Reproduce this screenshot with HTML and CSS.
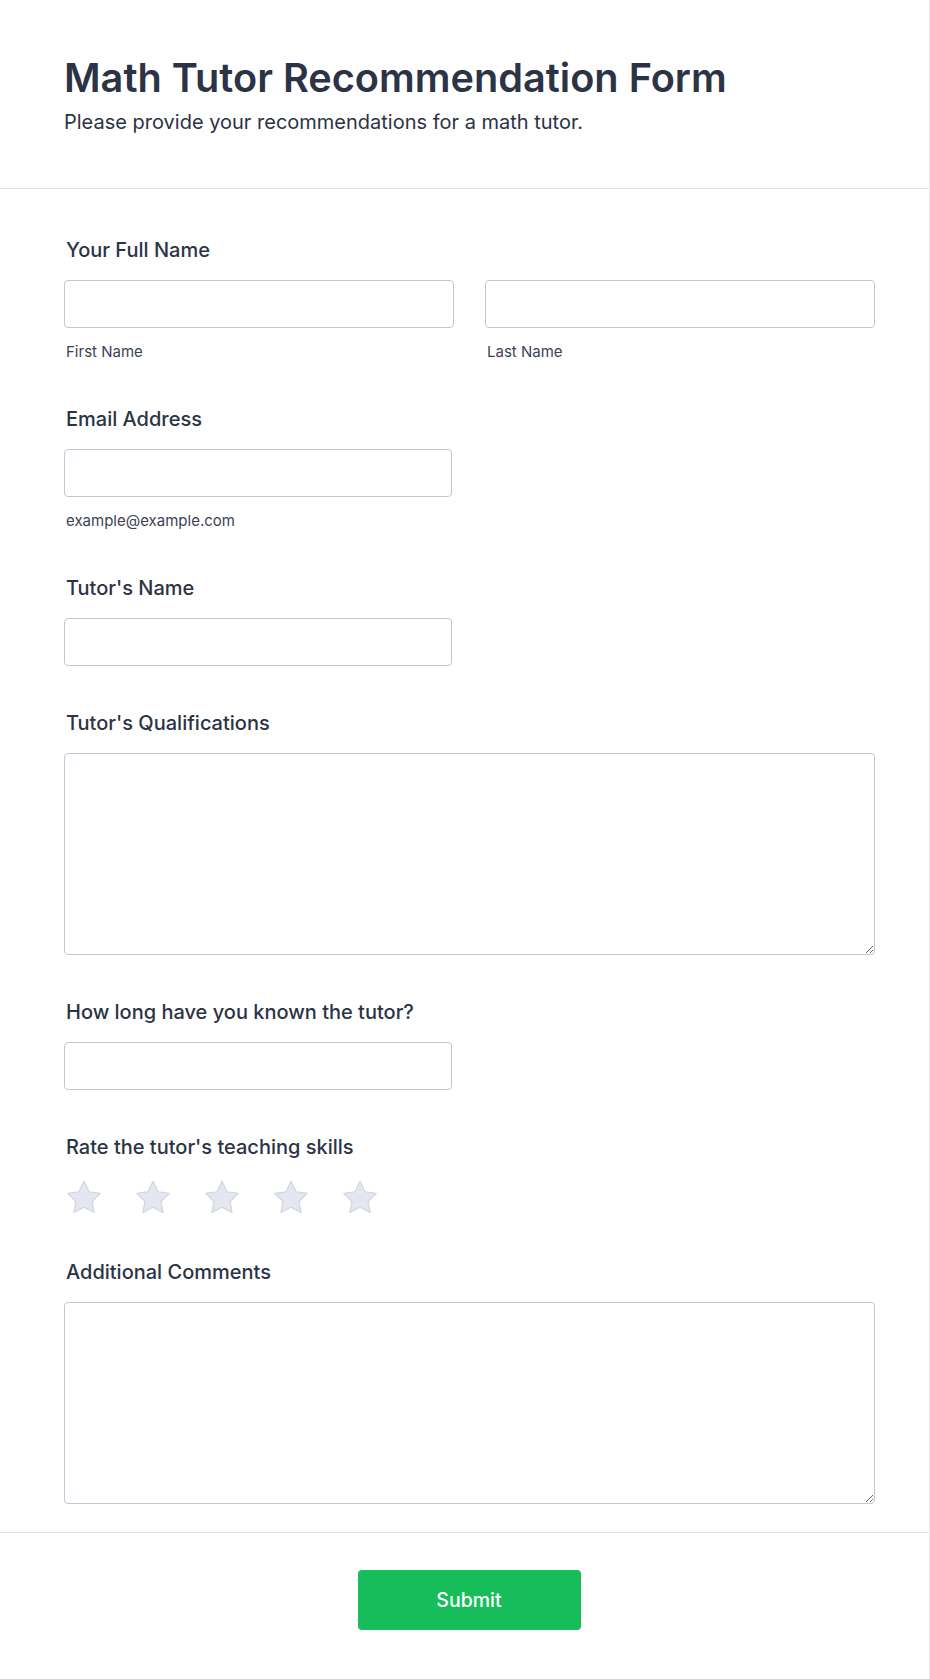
FILE: index.html
```html
<!DOCTYPE html>
<html lang="en">
<head>
<meta charset="utf-8">
<title>Math Tutor Recommendation Form</title>
<link rel="stylesheet" href="styles.css">
</head>
<body>
<div class="page">
  <header class="form-header">
    <h1 class="title">Math Tutor Recommendation Form</h1>
    <p class="subtitle">Please provide your recommendations for a math tutor.</p>
  </header>

  <main class="form-body">
    <div class="field">
      <label class="label">Your Full Name</label>
      <div class="name-row">
        <div class="sub-field">
          <input class="input" type="text">
          <span class="sublabel">First Name</span>
        </div>
        <div class="sub-field">
          <input class="input" type="text">
          <span class="sublabel">Last Name</span>
        </div>
      </div>
    </div>

    <div class="field">
      <label class="label">Email Address</label>
      <input class="input input-short" type="email">
      <span class="sublabel">example@example.com</span>
    </div>

    <div class="field">
      <label class="label">Tutor's Name</label>
      <input class="input input-short" type="text">
    </div>

    <div class="field">
      <label class="label">Tutor's Qualifications</label>
      <textarea class="textarea"></textarea>
    </div>

    <div class="field">
      <label class="label">How long have you known the tutor?</label>
      <input class="input input-short" type="text">
    </div>

    <div class="field">
      <label class="label label-rating">Rate the tutor's teaching skills</label>
      <div class="stars">
        <svg class="star" viewBox="0 0 40 38" aria-hidden="true"><path d="M20 2.5 L25.3 13.4 L37.2 15.1 L28.6 23.5 L30.6 35.4 L20 29.8 L9.4 35.4 L11.4 23.5 L2.8 15.1 L14.7 13.4 Z"/></svg>
        <svg class="star" viewBox="0 0 40 38" aria-hidden="true"><path d="M20 2.5 L25.3 13.4 L37.2 15.1 L28.6 23.5 L30.6 35.4 L20 29.8 L9.4 35.4 L11.4 23.5 L2.8 15.1 L14.7 13.4 Z"/></svg>
        <svg class="star" viewBox="0 0 40 38" aria-hidden="true"><path d="M20 2.5 L25.3 13.4 L37.2 15.1 L28.6 23.5 L30.6 35.4 L20 29.8 L9.4 35.4 L11.4 23.5 L2.8 15.1 L14.7 13.4 Z"/></svg>
        <svg class="star" viewBox="0 0 40 38" aria-hidden="true"><path d="M20 2.5 L25.3 13.4 L37.2 15.1 L28.6 23.5 L30.6 35.4 L20 29.8 L9.4 35.4 L11.4 23.5 L2.8 15.1 L14.7 13.4 Z"/></svg>
        <svg class="star" viewBox="0 0 40 38" aria-hidden="true"><path d="M20 2.5 L25.3 13.4 L37.2 15.1 L28.6 23.5 L30.6 35.4 L20 29.8 L9.4 35.4 L11.4 23.5 L2.8 15.1 L14.7 13.4 Z"/></svg>
      </div>
    </div>

    <div class="field">
      <label class="label">Additional Comments</label>
      <textarea class="textarea"></textarea>
    </div>
  </main>

  <footer class="form-footer">
    <button class="submit" type="submit">Submit</button>
  </footer>
</div>
</body>
</html>
```

FILE: styles.css
```css
* {
  box-sizing: border-box;
}

html, body {
  margin: 0;
  padding: 0;
  background: #ffffff;
}

body {
  font-family: Inter, "Noto Sans", "Liberation Sans", sans-serif;
  font-optical-sizing: none;
  color: #2c3345;
}

.page {
  width: 930px;
  min-height: 1679px;
  border-right: 1px solid #e6e8ef;
  background: #ffffff;
}

.form-header {
  padding: 54px 55px 52px 64px;
  border-bottom: 1px solid #e1e4ec;
}

.title {
  margin: 0;
  font-size: 39.7px;
  line-height: 48px;
  font-weight: 600;
  color: #2c3345;
}

.subtitle {
  margin: 7px 0 0;
  font-size: 20px;
  line-height: 27px;
  font-weight: 400;
  color: #2c3345;
}

.form-body {
  display: flex;
  flex-direction: column;
  gap: 44px;
  padding: 48px 55px 28px 64px;
  border-bottom: 1px solid #e1e4ec;
}

.field {
  display: flex;
  flex-direction: column;
  align-items: flex-start;
}

.label {
  display: block;
  font-size: 20px;
  line-height: 27px;
  font-weight: 500;
  padding-left: 2px;
  margin-bottom: 16px;
  color: #2c3345;
}

.label-rating {
  margin-bottom: 18px;
}

.name-row {
  display: grid;
  grid-template-columns: 390px 390px;
  column-gap: 31px;
  width: 811px;
}

.sub-field {
  display: flex;
  flex-direction: column;
}

.input {
  display: block;
  width: 100%;
  height: 48px;
  border: 1px solid #c0c6d3;
  border-radius: 4px;
  background: #ffffff;
  padding: 0 12px;
  font: inherit;
  outline: none;
}

.input-short {
  width: 388px;
}

.sublabel {
  display: block;
  margin-top: 14px;
  padding-left: 2px;
  font-size: 15px;
  line-height: 20px;
  color: #3b4256;
}

.textarea {
  display: block;
  width: 811px;
  height: 202px;
  border: 1px solid #c0c6d3;
  border-radius: 4px;
  background: #ffffff;
  resize: vertical;
  font: inherit;
  outline: none;
  margin: 0;
}

.stars {
  display: flex;
  gap: 31px;
  padding-left: 1px;
}

.star {
  width: 38px;
  height: 36px;
  display: block;
}

.star path {
  fill: #e4e7f0;
  stroke: #cfd4e0;
  stroke-width: 1.2;
  stroke-linejoin: round;
}

.form-footer {
  display: flex;
  justify-content: center;
  padding: 37px 55px 49px 64px;
}

.submit {
  width: 223px;
  height: 60px;
  border: none;
  border-radius: 4px;
  background: #18bd5b;
  color: #ffffff;
  font-family: Inter, "Noto Sans", "Liberation Sans", sans-serif;
  font-optical-sizing: none;
  font-size: 19.5px;
  font-weight: 500;
  cursor: pointer;
}
```
